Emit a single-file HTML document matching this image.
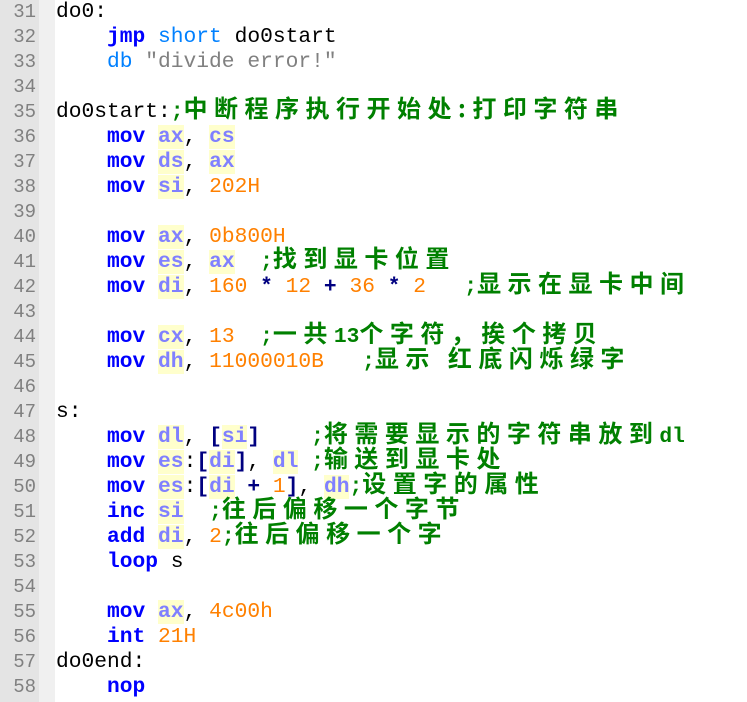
<!DOCTYPE html>
<html><head><meta charset="utf-8"><style>
body{margin:0;background:#fff;width:747px;height:702px;overflow:hidden;font-family:"Liberation Mono","Noto Sans CJK SC",monospace;font-size:21.25px;}
.g1{position:absolute;left:0;top:0;width:39px;height:702px;background:#e4e4e4;}
.g2{position:absolute;left:39px;top:0;width:16px;height:702px;background:#f0f0f0;}
.n{position:absolute;left:0;width:36px;text-align:right;color:#808080;font-size:19px;line-height:25px;}
.l{position:absolute;left:56px;height:25px;line-height:25px;white-space:pre;color:#000;}
.k{color:#0000ff;font-weight:bold}
.r{color:#8080ff;background:#ffffcc;font-weight:bold}
.d{color:#ff8000}
.o{color:#000080;font-weight:bold}
.s{color:#0080ff}
.q{color:#808080}
.c{color:#008000;font-weight:bold}
.z{font-family:"Noto Sans CJK SC","WenQuanYi Zen Hei",sans-serif;font-size:24px;letter-spacing:6.5px;line-height:0;}
</style></head><body>
<div class="g1"></div><div class="g2"></div>
<div class="n" style="top:0">31</div><div class="n" style="top:25px">32</div><div class="n" style="top:50px">33</div><div class="n" style="top:75px">34</div><div class="n" style="top:100px">35</div><div class="n" style="top:125px">36</div><div class="n" style="top:150px">37</div><div class="n" style="top:175px">38</div><div class="n" style="top:200px">39</div><div class="n" style="top:225px">40</div><div class="n" style="top:250px">41</div><div class="n" style="top:275px">42</div><div class="n" style="top:300px">43</div><div class="n" style="top:325px">44</div><div class="n" style="top:350px">45</div><div class="n" style="top:375px">46</div><div class="n" style="top:400px">47</div><div class="n" style="top:425px">48</div><div class="n" style="top:450px">49</div><div class="n" style="top:475px">50</div><div class="n" style="top:500px">51</div><div class="n" style="top:525px">52</div><div class="n" style="top:550px">53</div><div class="n" style="top:575px">54</div><div class="n" style="top:600px">55</div><div class="n" style="top:625px">56</div><div class="n" style="top:650px">57</div><div class="n" style="top:675px">58</div>

<div class="l" style="top:0">do0:</div>
<div class="l" style="top:25px">    <span class="k">jmp</span> <span class="s">short</span> do0start</div>
<div class="l" style="top:50px">    <span class="s">db</span> <span class="q">"divide error!"</span></div>
<div class="l" style="top:100px">do0start:<span class="c">;<span class="z">中断程序执行开始处:打印字符串</span></span></div>
<div class="l" style="top:125px">    <span class="k">mov</span> <span class="r">ax</span>, <span class="r">cs</span></div>
<div class="l" style="top:150px">    <span class="k">mov</span> <span class="r">ds</span>, <span class="r">ax</span></div>
<div class="l" style="top:175px">    <span class="k">mov</span> <span class="r">si</span>, <span class="d">202H</span></div>
<div class="l" style="top:225px">    <span class="k">mov</span> <span class="r">ax</span>, <span class="d">0b800H</span></div>
<div class="l" style="top:250px">    <span class="k">mov</span> <span class="r">es</span>, <span class="r">ax</span>  <span class="c">;<span class="z">找到显卡位置</span></span></div>
<div class="l" style="top:275px">    <span class="k">mov</span> <span class="r">di</span>, <span class="d">160</span> <span class="o">*</span> <span class="d">12</span> <span class="o">+</span> <span class="d">36</span> <span class="o">*</span> <span class="d">2</span>   <span class="c">;<span class="z">显示在显卡中间</span></span></div>
<div class="l" style="top:325px">    <span class="k">mov</span> <span class="r">cx</span>, <span class="d">13</span>  <span class="c">;<span class="z">一共</span>13<span class="z">个字符，挨个拷贝</span></span></div>
<div class="l" style="top:350px">    <span class="k">mov</span> <span class="r">dh</span>, <span class="d">11000010B</span>   <span class="c">;<span class="z">显示 红底闪烁绿字</span></span></div>
<div class="l" style="top:400px">s:</div>
<div class="l" style="top:425px">    <span class="k">mov</span> <span class="r">dl</span>, <span class="o">[</span><span class="r">si</span><span class="o">]</span>    <span class="c">;<span class="z">将需要显示的字符串放到</span>dl</span></div>
<div class="l" style="top:450px">    <span class="k">mov</span> <span class="r">es</span>:<span class="o">[</span><span class="r">di</span><span class="o">]</span>, <span class="r">dl</span> <span class="c">;<span class="z">输送到显卡处</span></span></div>
<div class="l" style="top:475px">    <span class="k">mov</span> <span class="r">es</span>:<span class="o">[</span><span class="r">di</span> <span class="o">+</span> <span class="d">1</span><span class="o">]</span>, <span class="r">dh</span><span class="c">;<span class="z">设置字的属性</span></span></div>
<div class="l" style="top:500px">    <span class="k">inc</span> <span class="r">si</span>  <span class="c">;<span class="z">往后偏移一个字节</span></span></div>
<div class="l" style="top:525px">    <span class="k">add</span> <span class="r">di</span>, <span class="d">2</span><span class="c">;<span class="z">往后偏移一个字</span></span></div>
<div class="l" style="top:550px">    <span class="k">loop</span> s</div>
<div class="l" style="top:600px">    <span class="k">mov</span> <span class="r">ax</span>, <span class="d">4c00h</span></div>
<div class="l" style="top:625px">    <span class="k">int</span> <span class="d">21H</span></div>
<div class="l" style="top:650px">do0end:</div>
<div class="l" style="top:675px">    <span class="k">nop</span></div>
</body></html>
